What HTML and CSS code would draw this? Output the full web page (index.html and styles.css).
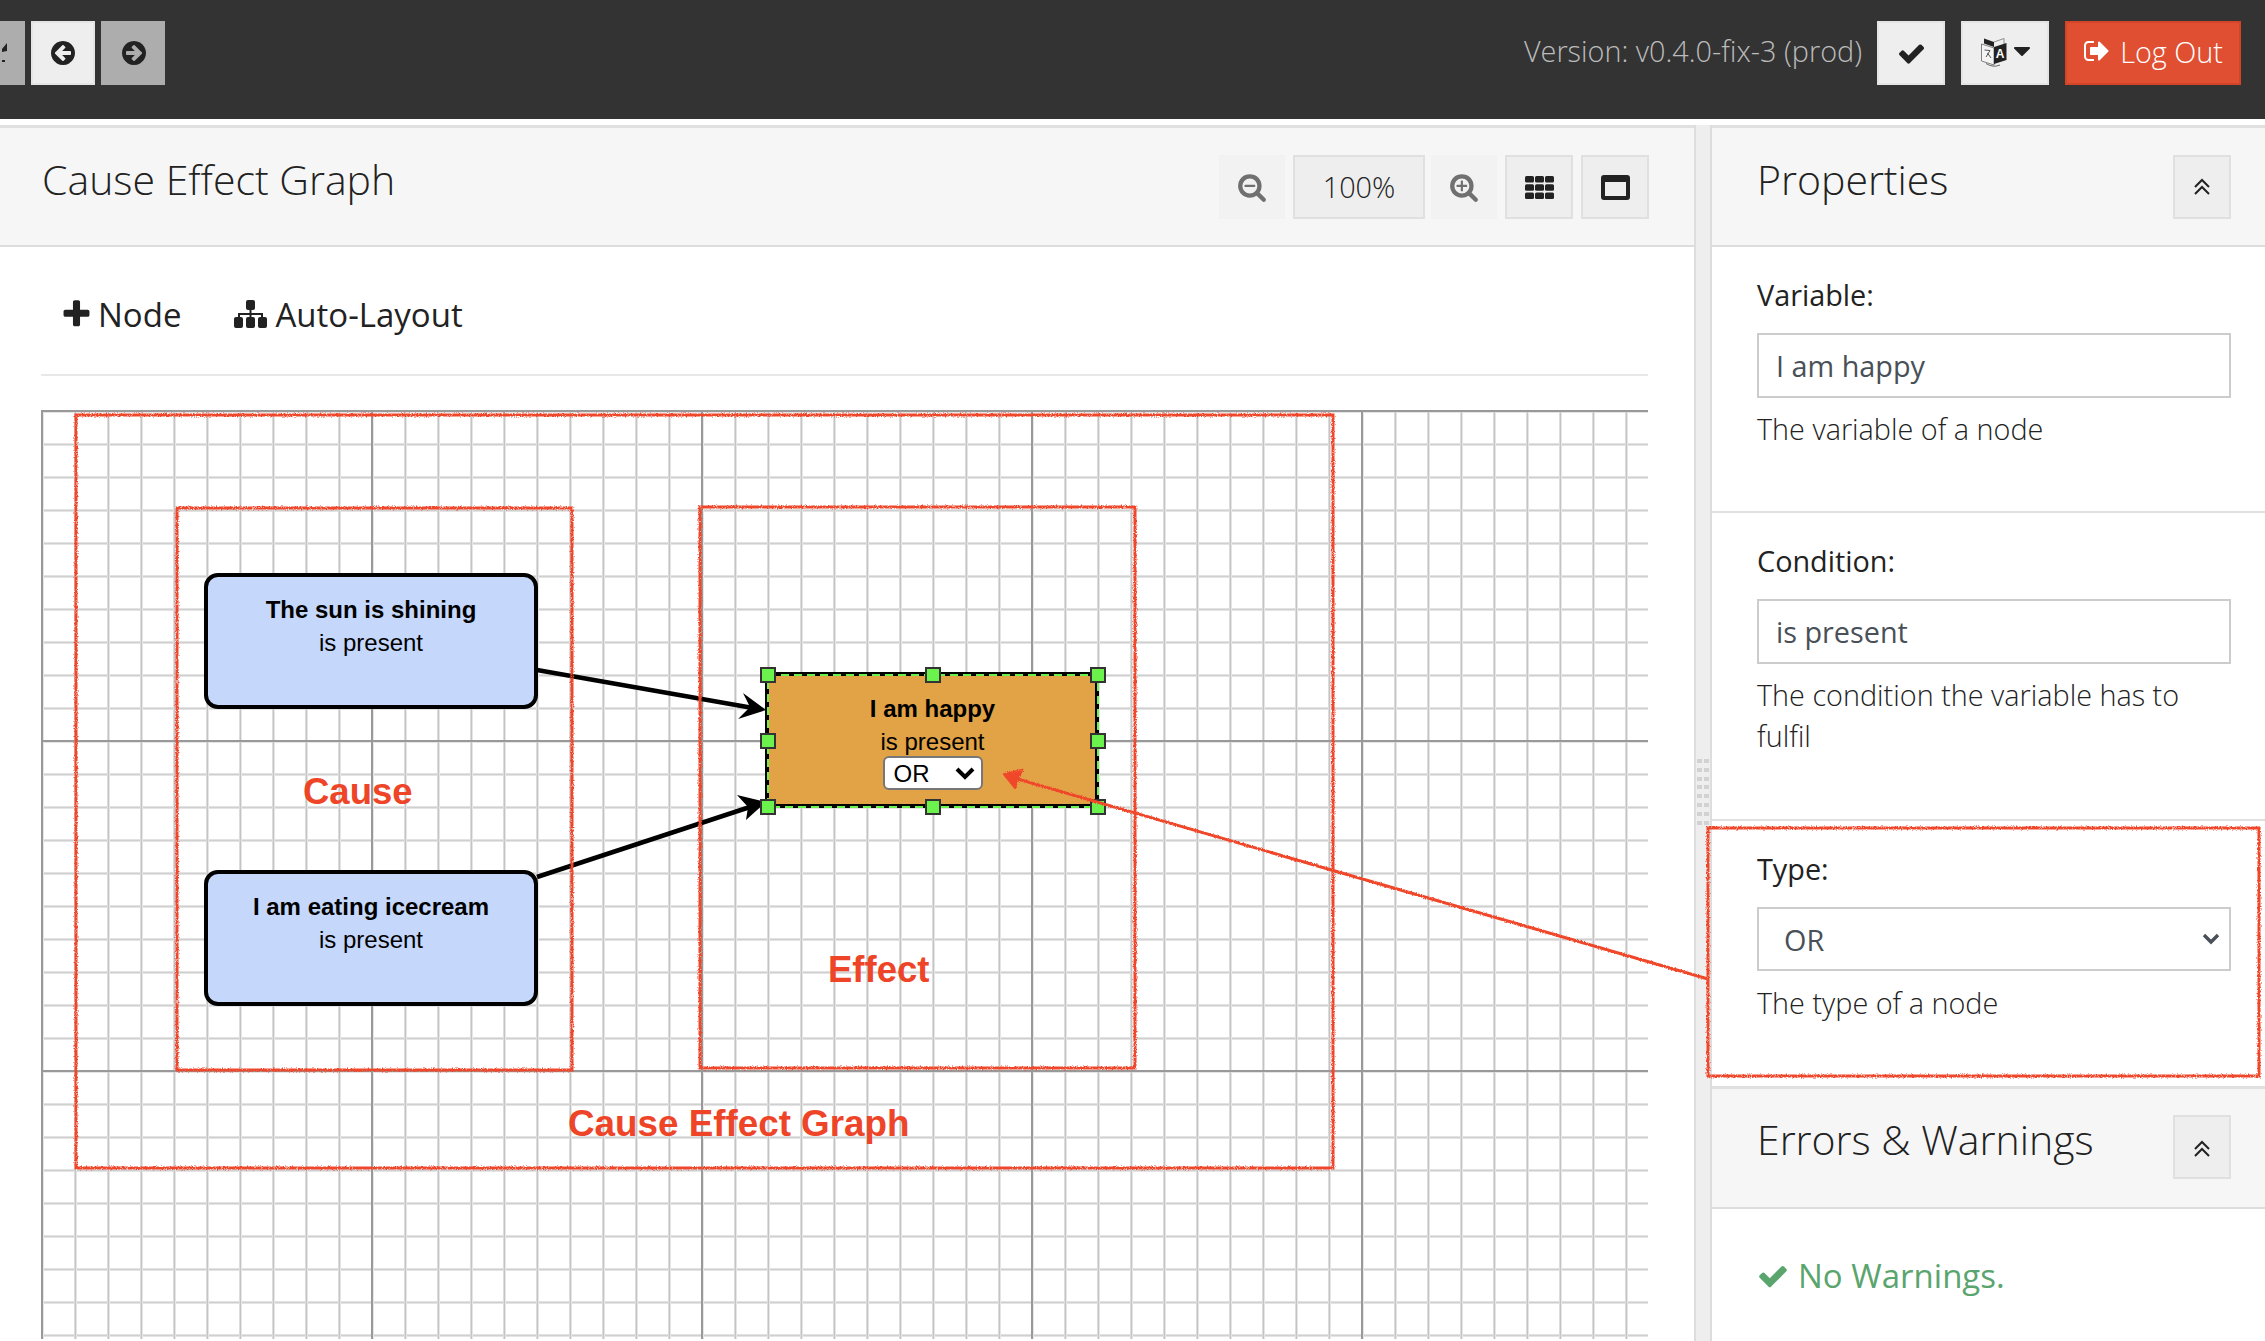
FILE: index.html
```html
<!DOCTYPE html>
<html lang="en">
<head>
    <meta charset="UTF-8">
    <title>Cause Effect Graph</title>
    <link rel="stylesheet" href="styles.css">
</head>
<body>
    <header class="topbar">
        <div class="btn-group">
            <button class="btn btn-dim btn-cut"><svg width="5" height="20" viewBox="0 0 5 20"><path d="M0 6 5 0V8L0 9zM0 17H3V19H0z"/></svg></button>
            <button class="btn"><svg class="fa" width="28" height="28" viewBox="0 0 1792 1792"><path d="M1408 960v-128q0-26-19-45t-45-19h-502l189-189q19-19 19-45t-19-45l-91-91q-18-18-45-18t-45 18l-362 362-91 91q-18 18-18 45t18 45l91 91 362 362q18 18 45 18t45-18l91-91q18-18 18-45t-18-45l-189-189h502q26 0 45-19t19-45zm256-64q0 209-103 385.5t-279.5 279.5-385.5 103-385.5-103-279.5-279.5-103-385.5 103-385.5 279.5-279.5 385.5-103 385.5 103 279.5 279.5 103 385.5z"/></svg></button>
            <button class="btn btn-dim"><svg class="fa icon-next" width="28" height="28" viewBox="0 0 1792 1792"><path d="M1413 896q0-27-18-45l-91-91-362-362q-18-18-45-18t-45 18l-91 91q-18 18-18 45t18 45l189 189h-502q-26 0-45 19t-19 45v128q0 26 19 45t45 19h502l-189 189q-19 19-19 45t19 45l91 91q18 18 45 18t45-18l362-362 91-91q18-18 18-45zm251 0q0 209-103 385.5t-279.5 279.5-385.5 103-385.5-103-279.5-279.5-103-385.5 103-385.5 279.5-279.5 385.5-103 385.5 103 279.5 279.5 103 385.5z"/></svg></button>
        </div>
        <div class="topbar-right">
            <span class="version">Version: v0.4.0-fix-3 (prod)</span>
            <button class="btn btn-check"><svg class="fa" width="29" height="29" viewBox="0 0 1792 1792"><path d="M1671 566q0 40-28 68l-724 724-136 136q-28 28-68 28t-68-28l-136-136-362-362q-28-28-28-68t28-68l136-136q28-28 68-28t68 28l294 295 656-657q28-28 68-28t68 28l136 136q28 28 28 68z"/></svg></button>
            <button class="btn btn-lang">
                <svg width="26" height="30" viewBox="0 0 26 30">
                    <path d="M13 4 23 .5V6" fill="none" stroke="#777" stroke-width=".8"/>
                    <path d="M.5 6 13 10V27L.5 23Z" fill="#f4f4f4" stroke="#666" stroke-width=".8"/>
                    <path d="M3 .5 13 4V9L3 5.5Z" fill="#222"/>
                    <path d="M13 9 25.5 5V22L13 26Z" fill="#222"/>
                    <path d="M3.5 12 9 12.5 5 19M6.5 15 10 20" fill="none" stroke="#444" stroke-width=".9"/>
                    <path d="M5 25.5Q12 30 19 27" fill="none" stroke="#444" stroke-width=".8"/>
                    <text x="19" y="19.5" class="lang-letter">A</text>
                </svg>
                <svg class="caret" width="28" height="28" viewBox="0 0 1792 1792"><path d="M1408 704q0 26-19 45l-448 448q-19 19-45 19t-45-19l-448-448q-19-19-19-45t19-45 45-19h896q26 0 45 19t19 45z"/></svg>
            </button>
            <button class="btn btn-logout">
                <svg class="fa" width="28" height="28" viewBox="0 0 1792 1792"><path d="M704 1440q0 4 1 20t.5 26.5-3 23.5-10 19.5-20.5 6.5h-320q-119 0-203.5-84.5t-84.5-203.5v-704q0-119 84.5-203.5t203.5-84.5h320q13 0 22.5 9.5t9.5 22.5q0 4 1 20t.5 26.5-3 23.5-10 19.5-20.5 6.5h-320q-66 0-113 47t-47 113v704q0 66 47 113t113 47h312l11.5 1 11.5 3 8 5.5 7 9 2 13.5zm928-544q0 26-19 45l-544 544q-19 19-45 19t-45-19-19-45v-288h-448q-26 0-45-19t-19-45v-384q0-26 19-45t45-19h448v-288q0-26 19-45t45-19 45 19l544 544q19 19 19 45z"/></svg>
                Log Out
            </button>
        </div>
    </header>

    <main class="workspace">
        <section class="graph-panel">
            <div class="panel-head">
                <h2>Cause Effect Graph</h2>
                <div class="zoom-tools">
                    <button class="tool tool-off"><svg class="fa" width="30" height="30" viewBox="0 0 1792 1792"><path d="M1088 800v64q0 13-9.5 22.5t-22.5 9.5h-576q-13 0-22.5-9.5t-9.5-22.5v-64q0-13 9.5-22.5t22.5-9.5h576q13 0 22.5 9.5t9.5 22.5zm128 32q0-185-131.5-316.5t-316.5-131.5-316.5 131.5-131.5 316.5 131.5 316.5 316.5 131.5 316.5-131.5 131.5-316.5zm512 832q0 53-37.5 90.5t-90.5 37.5q-54 0-90-38l-343-342q-179 124-399 124-143 0-273.5-55.5t-225-150-150-225-55.5-273.5 55.5-273.5 150-225 225-150 273.5-55.5 273.5 55.5 225 150 150 225 55.5 273.5q0 220-124 399l343 343q37 37 37 90z"/></svg></button>
                    <button class="tool tool-pct">100%</button>
                    <button class="tool tool-off"><svg class="fa" width="30" height="30" viewBox="0 0 1792 1792"><path d="M1088 800v64q0 13-9.5 22.5t-22.5 9.5h-224v224q0 13-9.5 22.5t-22.5 9.5h-64q-13 0-22.5-9.5t-9.5-22.5v-224h-224q-13 0-22.5-9.5t-9.5-22.5v-64q0-13 9.5-22.5t22.5-9.5h224v-224q0-13 9.5-22.5t22.5-9.5h64q13 0 22.5 9.5t9.5 22.5v224h224q13 0 22.5 9.5t9.5 22.5zm128 32q0-185-131.5-316.5t-316.5-131.5-316.5 131.5-131.5 316.5 131.5 316.5 316.5 131.5 316.5-131.5 131.5-316.5zm512 832q0 53-37.5 90.5t-90.5 37.5q-54 0-90-38l-343-342q-179 124-399 124-143 0-273.5-55.5t-225-150-150-225-55.5-273.5 55.5-273.5 150-225 225-150 273.5-55.5 273.5 55.5 225 150 150 225 55.5 273.5q0 220-124 399l343 343q37 37 37 90z"/></svg></button>
                    <button class="tool tool-on">
                        <svg width="29" height="23" viewBox="0 0 29 23"><g fill="#222"><rect width="9" height="6.6" rx="1.5"/><rect x="10" width="9" height="6.6" rx="1.5"/><rect x="20" width="9" height="6.6" rx="1.5"/><rect y="8.2" width="9" height="6.6" rx="1.5"/><rect x="10" y="8.2" width="9" height="6.6" rx="1.5"/><rect x="20" y="8.2" width="9" height="6.6" rx="1.5"/><rect y="16.4" width="9" height="6.6" rx="1.5"/><rect x="10" y="16.4" width="9" height="6.6" rx="1.5"/><rect x="20" y="16.4" width="9" height="6.6" rx="1.5"/></g></svg>
                    </button>
                    <button class="tool tool-on">
                        <svg width="29" height="25" viewBox="0 0 29 25"><path fill="#222" fill-rule="evenodd" d="M3 0H26Q29 0 29 3V22Q29 25 26 25H3Q0 25 0 22V3Q0 0 3 0ZM4 7V21H25V7Z"/></svg>
                    </button>
                </div>
            </div>

            <div class="graph-body">
                <div class="graph-toolbar">
                    <a class="graph-action"><svg class="fa" width="33" height="33" viewBox="0 0 1792 1792"><path d="M1600 736v192q0 40-28 68t-68 28h-416v416q0 40-28 68t-68 28h-192q-40 0-68-28t-28-68v-416h-416q-40 0-68-28t-28-68v-192q0-40 28-68t68-28h416v-416q0-40 28-68t68-28h192q40 0 68 28t28 68v416h416q40 0 68 28t28 68z"/></svg>Node</a>
                    <a class="graph-action action-layout">
                        <svg width="33" height="28" viewBox="0 0 33 28"><g fill="#222"><rect x="12" width="9" height="10" rx="2"/><rect y="17" width="9" height="11" rx="2"/><rect x="12" y="17" width="9" height="11" rx="2"/><rect x="24" y="17" width="9" height="11" rx="2"/><rect x="15.5" y="9" width="2" height="8"/><rect x="4" y="13" width="25" height="2"/><rect x="4" y="13" width="2" height="5"/><rect x="27" y="13" width="2" height="5"/></g></svg>
                        Auto-Layout
                    </a>
                </div>

                <div class="canvas">
                    <svg class="canvas-lines" width="1605" height="929">
                        <path d="M496 260 712 298" stroke="#000" stroke-width="4.5" fill="none"/>
                        <path d="M496 467 712 396" stroke="#000" stroke-width="4.5" fill="none"/>
                        <path d="M725 300 702 283 709 297 697 309Z" fill="#000"/>
                        <path d="M725 392 696 385 707 397 705 410Z" fill="#000"/>
                    </svg>

                    <div class="node node-cause node-sun"><b>The sun is shining</b><span>is present</span></div>
                    <div class="node node-cause node-ice"><b>I am eating icecream</b><span>is present</span></div>
                    <div class="node node-effect">
                        <b>I am happy</b><span>is present</span>
                        <div class="node-select">
                            <select><option>OR</option></select>
                            <svg width="20" height="13" viewBox="0 0 20 13"><path d="M2 2 10 10 18 2" fill="none" stroke="#000" stroke-width="4"/></svg>
                        </div>
                        <svg class="node-dash" width="334" height="136"><rect x="3" y="3" width="330" height="132"/></svg>
                    </div>
                    <i class="handle h-tl"></i><i class="handle h-tc"></i><i class="handle h-tr"></i>
                    <i class="handle h-ml"></i><i class="handle h-mr"></i>
                    <i class="handle h-bl"></i><i class="handle h-bc"></i><i class="handle h-br"></i>

                    <span class="note note-cause">Cause</span>
                    <span class="note note-effect">Effect</span>
                    <span class="note note-graph">Cause Effect Graph</span>
                </div>
            </div>
        </section>

        <div class="splitter"><div class="splitter-dots"></div></div>

        <aside class="side-panel">
            <div class="panel-head">
                <h2>Properties</h2>
                <button class="tool tool-on tool-collapse"><svg width="18" height="18" viewBox="0 0 18 18"><path d="M2 9 9 2 16 9M2 16 9 9 16 16" fill="none" stroke="#222" stroke-width="2"/></svg></button>
            </div>
            <div class="field">
                <label>Variable:</label>
                <input type="text" value="I am happy">
                <p>The variable of a node</p>
            </div>
            <div class="field field-wrap">
                <label>Condition:</label>
                <input type="text" value="is present">
                <p>The condition the variable has to fulfil</p>
            </div>
            <div class="field field-last">
                <label>Type:</label>
                <div class="field-select">
                    <select><option>OR</option></select>
                    <svg width="18" height="12" viewBox="0 0 18 12"><path d="M2 2 9 9 16 2" fill="none" stroke="#495057" stroke-width="3.4"/></svg>
                </div>
                <p>The type of a node</p>
            </div>
            <div class="panel-head panel-head-errors">
                <h2>Errors &amp; Warnings</h2>
                <button class="tool tool-on tool-collapse"><svg class="icon-low" width="18" height="18" viewBox="0 0 18 18"><path d="M2 9 9 2 16 9M2 16 9 9 16 16" fill="none" stroke="#222" stroke-width="2"/></svg></button>
            </div>
            <div class="no-warnings">
                <svg class="fa" width="32" height="32" viewBox="0 0 1792 1792"><path d="M1671 566q0 40-28 68l-724 724-136 136q-28 28-68 28t-68-28l-136-136-362-362q-28-28-28-68t28-68l136-136q28-28 68-28t68 28l294 295 656-657q28-28 68-28t68 28l136 136q28 28 28 68z"/></svg>
                No Warnings.
            </div>
        </aside>
    </main>

    <svg class="annotations" width="2265" height="1341">
        <defs>
            <filter id="rough" x="-2%" y="-2%" width="104%" height="104%">
                <feTurbulence type="fractalNoise" baseFrequency="0.8" numOctaves="2" seed="4"/>
                <feDisplacementMap in="SourceGraphic" scale="3.5"/>
            </filter>
        </defs>
        <g class="marks" filter="url(#rough)">
            <rect x="76" y="415" width="1257" height="753"/>
            <rect x="177" y="508" width="395" height="562"/>
            <rect x="700" y="507" width="435" height="561"/>
            <rect x="1708" y="828" width="551" height="248"/>
            <path d="M1014 778 1708 979"/>
            <path class="mark-head" d="M1003 774 1023 769 1015 789Z"/>
        </g>
    </svg>
</body>
</html>
```

FILE: styles.css
```css
* { box-sizing: border-box; }
html, body { margin: 0; height: 100%; }
body { width: 2265px; height: 1341px; overflow: hidden; position: relative; background: #fff; color: #222; font-family: "Open Sans", "Liberation Sans", sans-serif; font-size: 28.8px; font-weight: 400; }
h2 { margin: 0; font-size: 41px; line-height: 48px; font-weight: 300; }
button { font-family: inherit; font-size: inherit; padding: 0; cursor: pointer; }
.fa { fill-rule: evenodd; }

.topbar { height: 119px; background: #333; padding: 21px 24px 0 0; display: flex; justify-content: space-between; align-items: flex-start; }
.btn-group { display: flex; gap: 6px; }
.topbar-right { display: flex; align-items: flex-start; }
.btn { width: 64px; height: 64px; background: #eee; border: 2px solid #e4e4e4; color: #222; display: flex; align-items: center; justify-content: center; fill: #222; }
.btn-dim { background: #adadad; border-color: #adadad; }
.btn-cut { width: 25px; justify-content: flex-start; padding: 0; }
.icon-next { margin-left: 2px; }
.version { color: #bbb; font-weight: 300; line-height: 60px; margin-right: 15px; }
.btn-check { width: 68px; margin-right: 16px; }
.btn-lang { width: 88px; margin-right: 16px; gap: 1px; justify-content: flex-start; padding-left: 18px; }
.caret { margin-top: -5px; fill: #222; }
.lang-letter { font-family: "Liberation Sans", sans-serif; font-size: 12px; font-weight: 700; fill: #fff; text-anchor: middle; }
.btn-logout { width: 176px; background: #e04f32; border-color: #d44527; color: #fff; fill: #fff; font-weight: 300; gap: 9px; padding-bottom: 4px; }

.workspace { margin-top: 6px; height: 1216px; display: flex; }
.graph-panel { width: 1694px; flex: none; }
.side-panel { flex: 1; min-width: 0; }
.panel-head { height: 122px; background: #f6f6f6; border-top: 3px solid #e0e0e0; border-bottom: 2px solid #ddd; padding: 27px 34px 0 42px; display: flex; justify-content: space-between; align-items: flex-start; }
.side-panel .panel-head { padding-left: 45px; }
.zoom-tools { display: flex; gap: 8px; margin-right: 11px; }
.tool { width: 66px; height: 64px; background: #eee; border: 2px solid #e0e0e0; display: flex; align-items: center; justify-content: center; color: #222; font-weight: 300; }
.tool-off { background: #f2f2f2; border-color: #f2f2f2; fill: #707070; }
.tool-pct { width: 132px; margin-right: -2px; padding-bottom: 2px; }
.tool-on { width: 68px; }
.tool-collapse { width: 58px; }
.icon-low { margin-top: 4px; }

.graph-body { padding: 0 46px 0 41px; }
.graph-toolbar { height: 129px; border-bottom: 2px solid #e8e8e8; padding: 7px 0 0 22px; display: flex; align-items: center; gap: 53px; font-size: 33px; }
.graph-action { display: flex; align-items: center; gap: 5px; color: #222; fill: #222; }
.graph-action svg { margin-left: -3px; }
.action-layout svg { margin-left: 0; }
.action-layout { gap: 8px; }

.canvas { position: relative; margin-top: 34px; height: 929px; overflow: hidden; background-color: #fff;
    background-image:
        linear-gradient(to right, #999 2px, transparent 2px),
        linear-gradient(to bottom, #999 2px, transparent 2px),
        linear-gradient(to right, #dcdcdc 0 1px, #c4c4c4 1px 2px, #e6e6e6 2px 3px, transparent 3px),
        linear-gradient(to bottom, #e2e2e2 0 1px, #d0d0d0 1px 2px, #e4e4e4 2px 3px, transparent 3px);
    background-size: 330px 330px, 330px 330px, 33px 33px, 33px 33px;
}
.canvas-lines { position: absolute; left: 0; top: 0; }

.node { position: absolute; width: 334px; height: 136px; border: 4px solid #000; border-radius: 14px; padding-top: 16px; display: flex; flex-direction: column; align-items: center; color: #000; font-family: "Liberation Sans", Arial, sans-serif; font-size: 24px; line-height: 33px; }
.node-cause { left: 163px; background: #c5d7fb; }
.node-sun { top: 163px; }
.node-ice { top: 460px; }
.node-effect { left: 724px; top: 262px; background: #e2a246; border-radius: 6px; padding-left: 1px; }
.node-dash { position: absolute; left: -4px; top: -4px; fill: none; stroke: #6cf24c; stroke-width: 2; stroke-dasharray: 8 5; }
.node-select { position: relative; width: 100px; height: 34px; margin-top: -2px; }
.node-select select { appearance: none; width: 100%; height: 100%; border: 2px solid #777; border-radius: 6px; background: #fff; padding: 0 0 0 9px; color: #000; font: 24px "Liberation Sans", Arial, sans-serif; }
.node-select svg { position: absolute; right: 8px; top: 11px; }

.handle { position: absolute; width: 16px; height: 16px; background: #6cf24c; border: 2px solid #333; }
.h-tl { left: 719px; top: 257px; }
.h-tc { left: 884px; top: 257px; }
.h-tr { left: 1049px; top: 257px; }
.h-ml { left: 719px; top: 323px; }
.h-mr { left: 1049px; top: 323px; }
.h-bl { left: 719px; top: 389px; }
.h-bc { left: 884px; top: 389px; }
.h-br { left: 1049px; top: 389px; }

.note { position: absolute; color: #ee4427; font-family: "Liberation Sans", Arial, sans-serif; font-size: 36.5px; line-height: 40px; font-weight: 700; white-space: nowrap; }
.note-cause { left: 262px; top: 362px; }
.note-effect { left: 787px; top: 540px; }
.note-graph { left: 527px; top: 694px; font-size: 36.8px; }

.splitter { width: 18px; flex: none; background: #eee; border-left: 2px solid #ddd; border-right: 2px solid #ddd; padding-top: 634px; }
.splitter-dots { width: 12px; height: 66px; margin-left: 1px;
    background-image:
        repeating-linear-gradient(to bottom, transparent 0 4px, #eee 4px 8.8px),
        repeating-linear-gradient(to right, #d2d2d2 0 5px, #eee 5px 7px);
}

.field { padding: 28px 34px 62px 45px; border-bottom: 2px solid #e0e0e0; }
.field-wrap { padding-bottom: 63px; }
.field-last { border-bottom: 0; padding-bottom: 63px; }
.field label { display: block; line-height: 40px; margin-bottom: 18px; }
.field input { display: block; width: 100%; height: 65px; border: 2px solid #ccc; padding: 0 17px; color: #495057; font: inherit; outline: none; border-radius: 0; }
.field p { margin: 10px 0 0; font-weight: 300; line-height: 41px; }
.field-last p { margin-top: 11px; }
.field-select { position: relative; height: 64px; }
.field-select select { appearance: none; width: 100%; height: 100%; border: 2px solid #ccc; border-radius: 0; background: #fff; padding: 0 0 0 25px; color: #495057; font: inherit; }
.field-select svg { position: absolute; right: 11px; top: 26px; }
.side-panel .panel-head-errors { height: 123px; padding-top: 26px; }
.no-warnings { padding: 47px 0 0 45px; display: flex; align-items: center; gap: 9px; color: #5aa56e; fill: #5aa56e; line-height: 40px; font-size: 33px; }

.annotations { position: absolute; left: 0; top: 0; pointer-events: none; }
.marks * { fill: none; stroke: #f0472a; stroke-width: 3; }
.marks .mark-head { fill: #f0472a; stroke-width: 1; }
```
